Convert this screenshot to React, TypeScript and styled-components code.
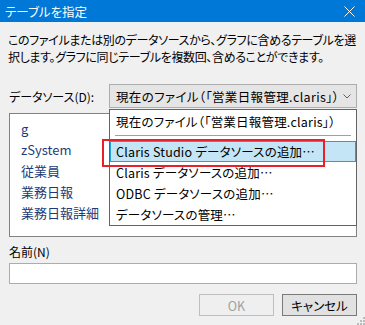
import { FC } from "react";
import styled, { createGlobalStyle } from "styled-components";

const GlobalStyle = createGlobalStyle`
  body {
    margin: 0;
    background: #f0f0f0;
    font-family: "Noto Sans CJK JP", "Noto Sans", sans-serif;
    font-feature-settings: "palt";
  }
`;

const Dialog = styled.div`
  position: relative;
  width: 365px;
  height: 325px;
  background: #f0f0f0;
  color: #000000;
  font-size: 12px;
  overflow: hidden;
`;

const TitleBar = styled.div`
  height: 22px;
  background: #0078d7;
  color: #ffffff;
  display: flex;
  align-items: center;
  justify-content: space-between;
  padding: 0 10px 0 5px;
  font-size: 12.5px;
`;

const Body = styled.div`
  padding: 9px 8px 0 9px;
  display: flex;
  flex-direction: column;
`;

const Desc = styled.div`
  line-height: 17px;
  margin-left: -1px;
  white-space: nowrap;
  letter-spacing: -0.35px;
`;

const SourceRow = styled.div`
  position: relative;
  display: flex;
  align-items: center;
  margin-top: 19px;
  height: 24px;
  font-size: 12.5px;
`;

const Label = styled.div`
  width: 100px;
  font-size: 12px;
`;

const Combo = styled.div`
  flex: 1;
  height: 24px;
  box-sizing: border-box;
  border: 1px solid #adadad;
  background: #e5e5e5;
  display: flex;
  align-items: center;
  justify-content: space-between;
  padding: 0 5px 0 6px;
  letter-spacing: 0.35px;
`;

const DropList = styled.div`
  position: absolute;
  left: 100px;
  right: 0;
  top: 25px;
  z-index: 2;
  background: #ffffff;
  border: 1px solid #646464;
  padding-top: 1px;
`;

const DropItem = styled.div<{ $active?: boolean }>`
  height: 21px;
  box-sizing: border-box;
  display: flex;
  align-items: center;
  padding-left: 5px;
  letter-spacing: 0.2px;
  background: ${(p) => (p.$active ? "#c4e5f6" : "transparent")};
  border: 1px solid ${(p) => (p.$active ? "#26a0da" : "transparent")};
`;

const Separator = styled.div`
  height: 9px;
  box-sizing: border-box;
  padding: 3px 5px 0;
  &::after {
    content: "";
    display: block;
    height: 1px;
    background: #a0a0a0;
  }
`;

const Callout = styled.div`
  position: absolute;
  left: -8px;
  top: -2px;
  width: 223px;
  height: 28px;
  box-sizing: border-box;
  border: 2px solid #e8202a;
  pointer-events: none;
`;

const ActiveWrap = styled.div`
  position: relative;
`;

const ListBox = styled.div`
  margin-top: 5px;
  height: 124px;
  box-sizing: border-box;
  border: 1px solid #828282;
  background: #ffffff;
  padding: 4px 0 0 11px;
  font-size: 13px;
`;

const ListItem = styled.div`
  height: 21px;
  line-height: 21px;
  color: #1d3b78;
`;

const NameLabel = styled.div`
  margin-top: 5px;
  height: 20px;
  line-height: 20px;
`;

const NameInput = styled.div`
  margin-top: 1px;
  height: 21px;
  box-sizing: border-box;
  border: 1px solid #acacac;
  background: #ffffff;
`;

const ButtonRow = styled.div`
  display: flex;
  justify-content: flex-end;
  gap: 8px;
  margin-top: 10px;
`;

const Button = styled.div<{ $disabled?: boolean }>`
  width: 75px;
  height: 22px;
  box-sizing: border-box;
  display: flex;
  align-items: center;
  justify-content: center;
  border: 1px solid ${(p) => (p.$disabled ? "#bfbfbf" : "#7a7a7a")};
  background: ${(p) => (p.$disabled ? "#efefef" : "#e1e1e1")};
  color: ${(p) => (p.$disabled ? "#a0a0a0" : "#000000")};
  font-size: 12.5px;
`;

const Grip = styled.svg`
  position: absolute;
  right: 0;
  bottom: 0;
`;

const tables = ["g", "zSystem", "従業員", "業務日報", "業務日報詳細"];
const current = "現在のファイル（「営業日報管理.claris」）";

const App: FC = () => {
  return (
    <Dialog>
      <GlobalStyle />
      <TitleBar>
        <span>テーブルを指定</span>
        <svg width="11" height="11" viewBox="0 0 11 11">
          <path d="M0.5 0.5 L10.5 10.5 M10.5 0.5 L0.5 10.5" stroke="#ffffff" strokeWidth="1" fill="none" />
        </svg>
      </TitleBar>
      <Body>
        <Desc>
          このファイルまたは別のデータソースから、グラフに含めるテーブルを選
          <br />
          択します。グラフに同じテーブルを複数回、含めることができます。
        </Desc>
        <SourceRow>
          <Label>データソース(D):</Label>
          <Combo>
            <span>{current}</span>
            <svg width="8" height="5" viewBox="0 0 8 5">
              <polyline points="0.5,0.5 4,4 7.5,0.5" stroke="#606060" strokeWidth="1" fill="none" />
            </svg>
          </Combo>
          <DropList>
            <DropItem>{current}</DropItem>
            <Separator />
            <ActiveWrap>
              <DropItem $active>Claris Studio データソースの追加…</DropItem>
              <Callout />
            </ActiveWrap>
            <DropItem>Claris データソースの追加…</DropItem>
            <DropItem>ODBC データソースの追加…</DropItem>
            <DropItem>データソースの管理…</DropItem>
          </DropList>
        </SourceRow>
        <ListBox>
          {tables.map((t) => (
            <ListItem key={t}>{t}</ListItem>
          ))}
        </ListBox>
        <NameLabel>名前(N)</NameLabel>
        <NameInput />
        <ButtonRow>
          <Button $disabled>OK</Button>
          <Button>キャンセル</Button>
        </ButtonRow>
      </Body>
      <Grip width="8" height="8" viewBox="0 0 8 8">
        {[
          [6, 0],
          [6, 3],
          [3, 3],
          [6, 6],
          [3, 6],
          [0, 6],
        ].map(([x, y]) => (
          <rect key={`${x}-${y}`} x={x} y={y} width="2" height="2" fill="#bcbcbc" />
        ))}
      </Grip>
    </Dialog>
  );
};

export default App;
